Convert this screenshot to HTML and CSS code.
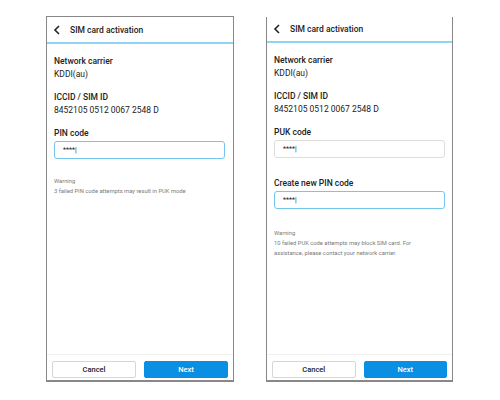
FILE: index.html
```html
<!DOCTYPE html>
<html lang="en">
<head>
    <meta charset="UTF-8">
    <title>SIM card activation</title>
    <link rel="stylesheet" href="styles.css">
</head>
<body>
    <div class="phone phone-left">
        <div class="header">
            <svg class="back" width="8" height="10" viewBox="0 0 8 10"><path d="M6 1 L2 5 L6 9" fill="none" stroke="#222" stroke-width="1.6"/></svg>
            <span class="title">SIM card activation</span>
        </div>
        <div class="content">
            <div class="field">
                <div class="label">Network carrier</div>
                <div class="value">KDDI(au)</div>
            </div>
            <div class="field">
                <div class="label">ICCID / SIM ID</div>
                <div class="value">8452105 0512 0067 2548 D</div>
            </div>
            <div class="field">
                <div class="label">PIN code</div>
                <div class="input focus">****|</div>
            </div>
            <div class="warning">
                <div>Warning</div>
                <div>3 failed PIN code attempts may result in PUK mode</div>
            </div>
        </div>
        <div class="footer">
            <button class="btn cancel">Cancel</button>
            <button class="btn next">Next</button>
        </div>
    </div>

    <div class="phone phone-right">
        <div class="header">
            <svg class="back" width="8" height="10" viewBox="0 0 8 10"><path d="M6 1 L2 5 L6 9" fill="none" stroke="#222" stroke-width="1.6"/></svg>
            <span class="title">SIM card activation</span>
        </div>
        <div class="content">
            <div class="field">
                <div class="label">Network carrier</div>
                <div class="value">KDDI(au)</div>
            </div>
            <div class="field">
                <div class="label">ICCID / SIM ID</div>
                <div class="value">8452105 0512 0067 2548 D</div>
            </div>
            <div class="field">
                <div class="label">PUK code</div>
                <div class="input">****|</div>
            </div>
            <div class="field second">
                <div class="label">Create new PIN code</div>
                <div class="input focus">****|</div>
            </div>
            <div class="warning">
                <div>Warning</div>
                <div>10 failed PUK code attempts may block SIM card. For assistance, please contact your network carrier.</div>
            </div>
        </div>
        <div class="footer">
            <button class="btn cancel">Cancel</button>
            <button class="btn next">Next</button>
        </div>
    </div>
</body>
</html>
```

FILE: styles.css
```css
*{
    box-sizing: border-box;
    font-family: Roboto, "Liberation Sans", sans-serif;
}

body{
    margin: 0;
    background-color: #fff;
    display: flex;
    align-items: flex-start;
    gap: 32px;
    padding: 16px 0 0 46px;
    color: #222;
}

.phone{
    display: flex;
    flex-direction: column;
    width: 188px;
    height: 366px;
    border: 1px solid #888;
    border-bottom-width: 2px;
}

.phone-right{
    width: 187px;
    border-top: none;
    margin-top: 1px;
    height: 365px;
}

.header{
    display: flex;
    align-items: center;
    height: 27px;
    padding-left: 6px;
    border-bottom: 2px solid #8fd4f2;
}

.phone-right .header{
    height: 26px;
}

.back{
    margin-right: 9px;
}

.title{
    font-size: 8.5px;
    font-weight: 500;
}

.content{
    flex: 1;
    padding: 11px 7px 0 7px;
}

.field{
    margin-bottom: 11px;
}

.label{
    font-size: 8.5px;
    font-weight: 500;
    line-height: 12px;
}

.value{
    margin-top: 1px;
    font-size: 8.5px;
    line-height: 12px;
}

.input{
    margin-top: 2px;
    height: 18px;
    border: 1px solid #ddd;
    border-radius: 3px;
    font-size: 7px;
    line-height: 16px;
    padding-left: 8px;
    width: 171px;
}

.input.focus{
    border-color: #74c6ee;
}

.field.second{
    margin-top: 19px;
}

.warning{
    margin-top: 17px;
    font-size: 5.8px;
    line-height: 10px;
    color: #7a7a7a;
    max-width: 150px;
}

.phone-right .warning{
    margin-top: 19px;
}

.footer{
    display: flex;
    gap: 8px;
    padding: 6px 5px 2px 5px;
    border-top: 1px solid #f0f0f0;
}

.btn{
    flex: 1;
    height: 17px;
    border-radius: 2px;
    font-size: 7.5px;
    font-weight: 500;
    padding: 0;
}

.cancel{
    background-color: #fff;
    border: 1px solid #d6d6d6;
    color: #222;
}

.next{
    background-color: #0b8fe2;
    border: 1px solid #0b8fe2;
    color: #fff;
}
```
